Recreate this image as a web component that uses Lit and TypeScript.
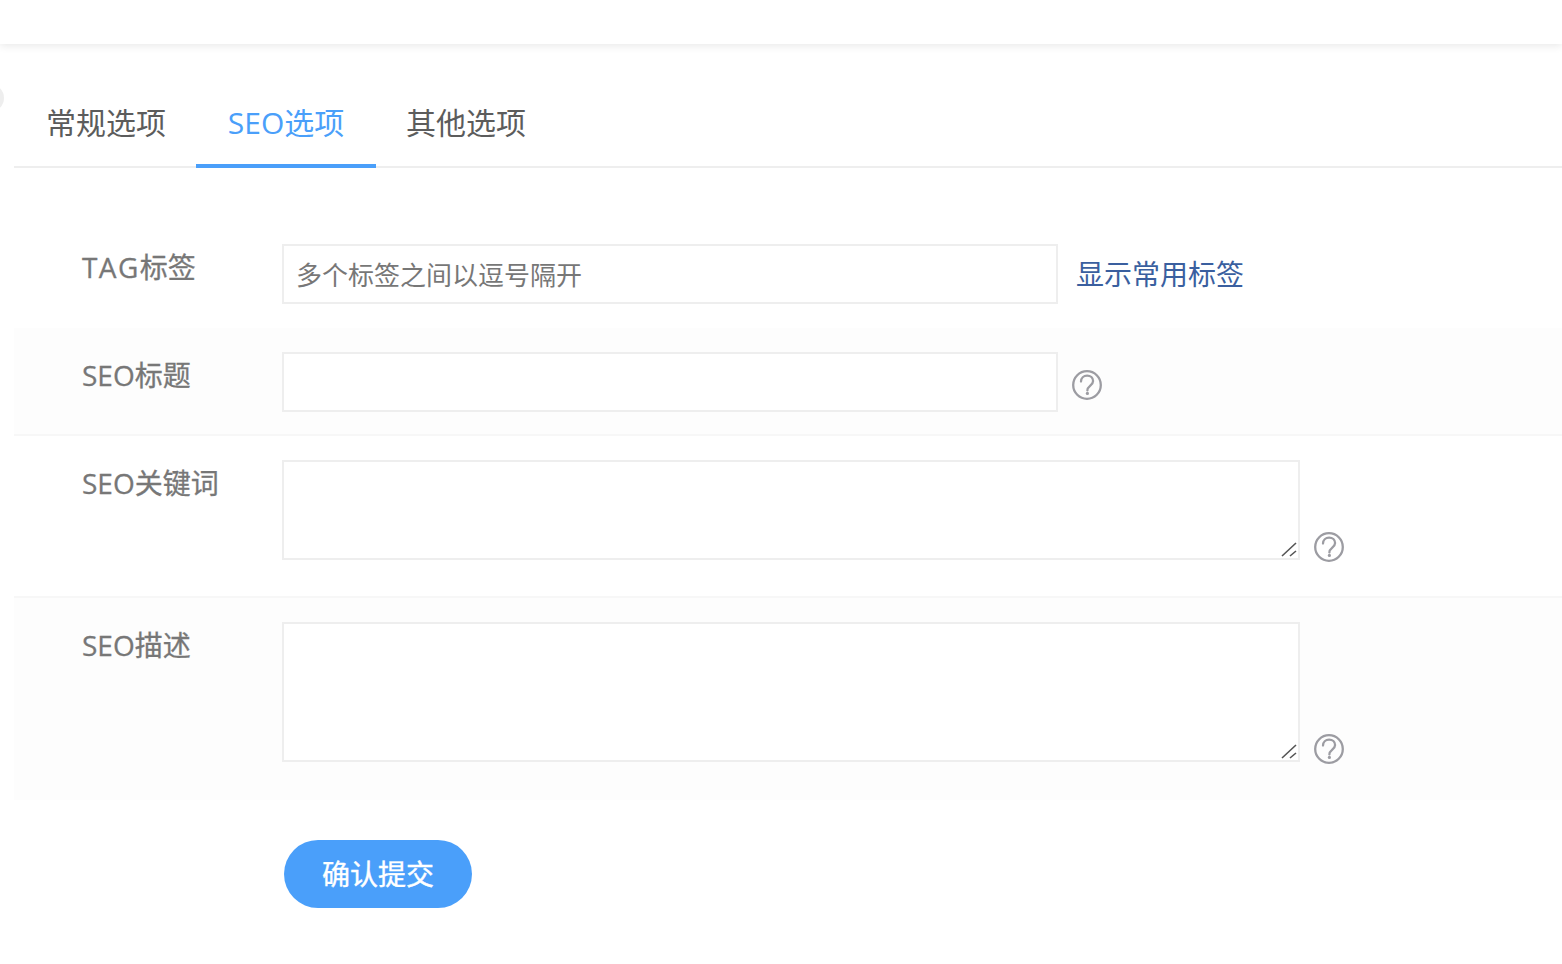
import { LitElement, html, css } from "lit";
import { customElement } from "lit/decorators.js";

@customElement("app-root")
export class AppRoot extends LitElement {
  static styles = css`
    :host {
      display: block;
      position: relative;
      height: 964px;
      overflow: hidden;
      background: #fff;
      font-family: "Open Sans", "Noto Sans CJK SC", sans-serif;
      color: #777;
    }
    .top {
      height: 44px;
      background: #fff;
      box-shadow: 0 2px 8px rgba(0, 0, 0, 0.09);
    }
    .dot {
      position: absolute;
      left: -24px;
      top: 84px;
      width: 28px;
      height: 28px;
      border-radius: 50%;
      background: #eee;
    }
    .main {
      margin-left: 14px;
    }
    .tabs {
      display: flex;
      height: 124px;
      padding-left: 2px;
      box-sizing: border-box;
      border-bottom: 2px solid #eee;
    }
    .tab {
      width: 180px;
      height: 124px;
      line-height: 158px;
      text-align: center;
      font-size: 30px;
      color: #5c5c5c;
      box-sizing: border-box;
      flex: none;
    }
    .tab.on {
      color: #4a9ffa;
      border-bottom: 4px solid #4a9ffa;
    }
    .form {
      margin-top: 52px;
    }
    .row {
      display: flex;
      padding: 24px 0;
      box-sizing: border-box;
    }
    .row.alt {
      background: #fdfdfd;
    }
    .row.line {
      border-bottom: 2px solid #f7f7f7;
      padding-bottom: 22px;
    }
    .row.tall {
      padding-bottom: 36px;
    }
    .row.last {
      padding-bottom: 38px;
    }
    .label {
      width: 268px;
      padding-left: 68px;
      box-sizing: border-box;
      font-size: 28px;
      line-height: 46px;
      color: #777;
      flex: none;
      -webkit-text-stroke: 0.3px #777;
    }
    .wide {
      letter-spacing: 1.4px;
    }
    input,
    textarea {
      display: block;
      box-sizing: border-box;
      border: 2px solid #eee;
      background: #fff;
      outline: none;
      margin: 0;
      font: inherit;
      flex: none;
    }
    input {
      width: 776px;
      height: 60px;
      padding: 1px 12px 0;
      font-size: 26px;
    }
    input::placeholder {
      color: #777;
      opacity: 1;
    }
    .area {
      position: relative;
      flex: none;
      width: 1018px;
    }
    textarea {
      width: 1018px;
      height: 100px;
      resize: none;
    }
    textarea.big {
      height: 140px;
    }
    .grip {
      position: absolute;
      right: 3px;
      bottom: 3px;
      width: 16px;
      height: 16px;
      pointer-events: none;
    }
    .link {
      margin-left: 18px;
      font-size: 28px;
      line-height: 60px;
      color: #3a5f9f;
    }
    .help {
      display: block;
      width: 30px;
      height: 30px;
      margin-left: 14px;
      align-self: flex-end;
      flex: none;
    }
    .help.a {
      margin-bottom: 12px;
    }
    .help.b {
      margin-bottom: -2px;
    }
    .actions {
      padding: 40px 0 0 270px;
    }
    button {
      display: block;
      width: 188px;
      height: 68px;
      border: 0;
      border-radius: 34px;
      background: #4a9ffa;
      color: #fff;
      font: inherit;
      font-size: 28px;
      padding: 0 0 2px;
      -webkit-text-stroke: 0.4px #fff;
    }
  `;

  private help(cls: string) {
    return html`<svg class="help ${cls}" viewBox="0 0 30 30" fill="none" stroke="#9c9ca2" stroke-width="2.3">
      <circle cx="15" cy="15" r="13.8"></circle>
      <path d="M9 11.6c0-3.6 2.7-6 6.1-6s6 2.3 6 5.4c0 4.6-5.7 4.6-5.7 9.4" stroke-linecap="round"></path>
      <circle cx="15.4" cy="23.4" r="1.6" fill="#9c9ca2" stroke="none"></circle>
    </svg>`;
  }

  private area(big: boolean) {
    return html`<div class="area">
      <textarea class=${big ? "big" : ""}></textarea>
      <svg class="grip" viewBox="0 0 16 16" stroke="#555" stroke-width="1.6" fill="none">
        <path d="M1 15L15 2M9 15l6-5"></path>
      </svg>
    </div>`;
  }

  render() {
    return html`
      <div class="top"></div>
      <div class="dot"></div>
      <div class="main">
        <div class="tabs">
          <div class="tab">常规选项</div>
          <div class="tab on">SEO选项</div>
          <div class="tab">其他选项</div>
        </div>
        <div class="form">
          <div class="row">
            <div class="label"><span class="wide">TAG</span>标签</div>
            <input placeholder="多个标签之间以逗号隔开" />
            <span class="link">显示常用标签</span>
          </div>
          <div class="row alt line">
            <div class="label">SEO标题</div>
            <input />
            ${this.help("a")}
          </div>
          <div class="row tall line">
            <div class="label">SEO关键词</div>
            ${this.area(false)}
            ${this.help("b")}
          </div>
          <div class="row alt last">
            <div class="label">SEO描述</div>
            ${this.area(true)}
            ${this.help("b")}
          </div>
          <div class="actions"><button>确认提交</button></div>
        </div>
      </div>
    `;
  }
}
